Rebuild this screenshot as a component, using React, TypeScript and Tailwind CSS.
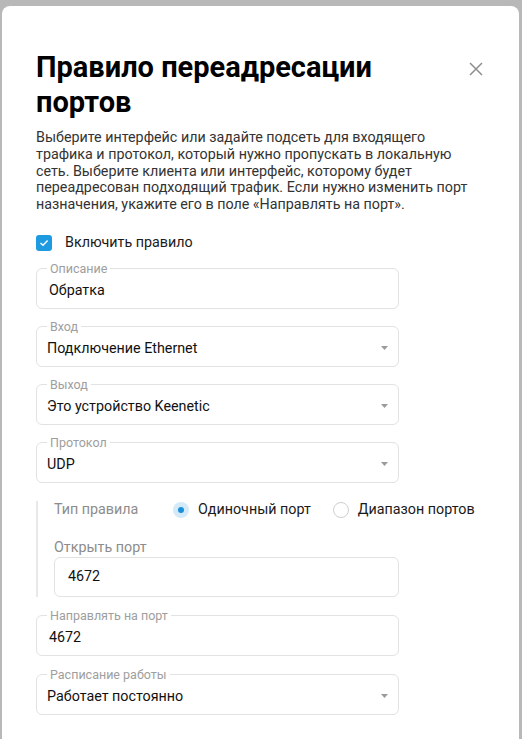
import React from "react";

const font = { fontFamily: "Roboto, 'Noto Sans', Arial, sans-serif" };

function Caret() {
  return (
    <svg width="7" height="4" viewBox="0 0 7 4" className="shrink-0">
      <path d="M0 0 L7 0 L3.5 4 Z" fill="#9a9a9a" />
    </svg>
  );
}

function Field({ label, value, select }: { label: string; value: string; select?: boolean }) {
  return (
    <fieldset className="border border-[#e2e2e2] rounded-[6px] w-[363px]">
      <legend className="ml-[10px] px-[3px] text-[12.5px] leading-[16px] text-[#9e9e9e]">{label}</legend>
      <div className={`flex items-center justify-between pt-[2px] pb-[7px] ${select ? "pl-[10px] pr-[10px]" : "pl-[12px] pr-[12px]"}`}>
        <span className="text-[14.3px] leading-[22px] text-[#111]">{value}</span>
        {select && <Caret />}
      </div>
    </fieldset>
  );
}

function Radio({ checked, label }: { checked?: boolean; label: string }) {
  return (
    <div className="flex items-center whitespace-nowrap">
      {checked ? (
        <span className="w-[16px] h-[16px] rounded-full bg-[#d4eaf8] flex items-center justify-center">
          <span className="w-[6px] h-[6px] rounded-full bg-[#1a90d8]" />
        </span>
      ) : (
        <span className="w-[16px] h-[16px] rounded-full border border-[#cfcfcf] bg-white" />
      )}
      <span className="ml-[9px] text-[14.3px] text-[#1a1a1a]">{label}</span>
    </div>
  );
}

export default function App() {
  return (
    <div style={font} className="w-[522px] h-[739px] bg-[#b8b8b8] overflow-hidden pt-[6px] pl-[2px] pr-[3px]">
      <div className="bg-white rounded-t-[8px] h-[760px] pl-[34px] pr-[38px] pt-[44px]">
        {/* header */}
        <div className="flex items-start justify-between">
          <h1 className="text-[29px] leading-[35px] font-bold text-black max-w-[400px]">
            Правило переадресации портов
          </h1>
          <button className="mt-[12px] mr-[-2px]">
            <svg width="14" height="14" viewBox="0 0 14 14">
              <path d="M1 1 L13 13 M13 1 L1 13" stroke="#8e8e8e" strokeWidth="1.5" />
            </svg>
          </button>
        </div>

        <p className="mt-[9px] text-[14.3px] leading-[16.8px] text-[#333]">
          Выберите интерфейс или задайте подсеть для входящего трафика и протокол, который нужно пропускать в локальную
          сеть. Выберите клиента или интерфейс, которому будет переадресован подходящий трафик. Если нужно изменить порт
          назначения, укажите его в поле «Направлять на порт».
        </p>

        {/* enable */}
        <div className="mt-[20px] h-[20px] flex items-center">
          <span className="w-[16px] h-[16px] rounded-[3px] bg-[#1e9be0] flex items-center justify-center">
            <svg width="10" height="8" viewBox="0 0 10 8">
              <path d="M1.5 4 L4 6.3 L8.6 1.6" stroke="white" strokeWidth="1.4" fill="none" />
            </svg>
          </span>
          <span className="ml-[13px] text-[14.3px] text-[#1a1a1a]">Включить правило</span>
        </div>

        <div className="mt-[8px] flex flex-col gap-[10px]">
          <Field label="Описание" value="Обратка" />
          <Field label="Вход" value="Подключение Ethernet" select />
          <Field label="Выход" value="Это устройство Keenetic" select />
          <Field label="Протокол" value="UDP" select />
        </div>

        {/* rule type */}
        <div className="mt-[18px] border-l-2 border-[#e8e8e8] pl-[16px]">
          <div className="h-[18px] flex items-center">
            <span className="w-[119px] shrink-0 text-[14.3px] text-[#8c8c8c]">Тип правила</span>
            <Radio checked label="Одиночный порт" />
            <div className="ml-[22px]">
              <Radio label="Диапазон портов" />
            </div>
          </div>
          <div className="mt-[18px] text-[14.3px] leading-[20px] text-[#8c8c8c]">Открыть порт</div>
          <div className="w-[345px] h-[40px] border border-[#e2e2e2] rounded-[6px] flex items-center px-[13px]">
            <span className="text-[14.3px] text-[#111]">4672</span>
          </div>
        </div>

        <div className="mt-[11px] flex flex-col gap-[11px]">
          <Field label="Направлять на порт" value="4672" />
          <Field label="Расписание работы" value="Работает постоянно" select />
        </div>
      </div>
    </div>
  );
}
